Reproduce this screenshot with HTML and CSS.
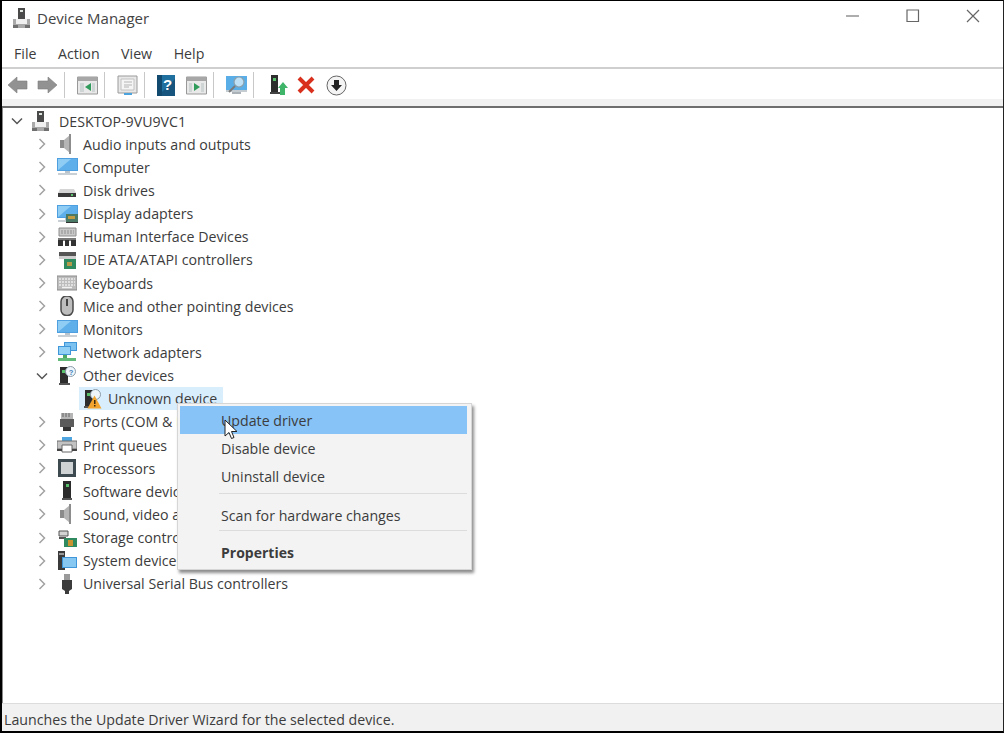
FILE: index.html
```html
<!DOCTYPE html>
<html lang="en">
<head>
<meta charset="utf-8">
<title>Device Manager</title>
<link rel="stylesheet" href="styles.css">
</head>
<body>
<svg class="defs" width="0" height="0" aria-hidden="true">
  <defs>
    <g id="i-pc">
      <path d="M6 0h7v11H6z" fill="#4a4a4a"/><path d="M8 2h3v2H8z" fill="#dfe6df"/>
      <path d="M1 11h17v9H1z" fill="#a9a9a9"/><path d="M4 11h11v5H4z" fill="#f0f0f0"/><path d="M1 17h5v3H1zM13 17h5v3h-5z" fill="#6f6f6f"/>
    </g>
    <g id="i-tower">
      <path d="M3 1h8v17H3z" fill="#2d2d2d"/><path d="M5 4h3v3H5z" fill="#58c06a"/><path d="M2 17h11v2H2z" fill="#555"/>
    </g>
    <g id="i-monitor">
      <path d="M0 1h21v13H0z" fill="#4d9fdf"/><path d="M1 2h19v11H1z" fill="#8fcdf5"/><path d="M1 13 14 2h6v11z" fill="#5fb0ea"/>
      <path d="M8 14h5v2H8z" fill="#b9c4cc"/><path d="M1 16h19v2H1z" fill="#c9d0d5"/>
    </g>
    <g id="i-speaker">
      <path d="M3 6h4v8H3z" fill="#8b8b8b"/><path d="M7 6l6-5v18l-6-5z" fill="#b5b5b5"/><path d="M12 0h2v20h-2z" fill="#8d8d8d"/>
    </g>
  </defs>
</svg>
<div class="window">
  <header class="titlebar">
    <svg class="app-icon" width="20" height="20" viewBox="0 0 20 20"><use href="#i-pc"/></svg>
    <span class="title">Device Manager</span>
    <div class="controls">
      <svg width="14" height="14" viewBox="0 0 14 14"><path d="M0 7h13" stroke="#777" stroke-width="1.2"/></svg>
      <svg width="14" height="14" viewBox="0 0 14 14"><path d="M1 1h11.500v11.500H1z" fill="none" stroke="#666" stroke-width="1.200"/></svg>
      <svg width="14" height="14" viewBox="0 0 14 14"><path d="M1 1l12 12M13 1L1 13" stroke="#666" stroke-width="1.200"/></svg>
    </div>
  </header>
  <nav class="menubar">
    <span>File</span><span>Action</span><span>View</span><span>Help</span>
  </nav>
  <div class="toolbar">
    <svg class="tb" width="21" height="20" viewBox="0 0 21 20"><path d="M1 10l9-8v4h10v8H10v4z" fill="#929292" stroke="#7d7d7d" stroke-width=".6"/></svg>
    <svg class="tb gap3" width="21" height="20" viewBox="0 0 21 20"><path d="M20 10l-9-8v4H1v8h10v4z" fill="#929292" stroke="#7d7d7d" stroke-width=".6"/></svg>
    <i class="tsep"></i>
    <svg class="tb" width="21" height="20" viewBox="0 0 21 20"><path d="M.5 2h20v17H.5z" fill="#e9e9e9" stroke="#999"/><path d="M.5 2h20v4H.5z" fill="#a7a7a7"/><path d="M3 8h4v9H3zM15 8h3v9h-3z" fill="#cfd4d4"/><path d="M14 8v8l-6-4z" fill="#2f9c5b"/></svg>
    <i class="tsep"></i>
    <svg class="tb" width="21" height="21" viewBox="0 0 21 21"><path d="M1 1h19v17H1z" fill="#e8e8e8" stroke="#9a9a9a"/><path d="M4 4h13v11H4z" fill="#f5f5f5" stroke="#c2c2c2"/><path d="M7 7h8M7 10h8M7 12h5" stroke="#b5b5b5"/><path d="M7 18h8v2H7z" fill="#4da3dd"/></svg>
    <i class="tsep"></i>
    <svg class="tb" width="18" height="21" viewBox="0 0 18 21"><path d="M0 0h18v21H0z" fill="#1f6f9f"/><path d="M0 0h5v21H0z" fill="#12496f"/><path d="M5 17l13-13v17H5z" fill="#17557e"/><text x="6" y="15" class="tb-q">?</text></svg>
    <svg class="tb gap5" width="21" height="20" viewBox="0 0 21 20"><path d="M.5 2h20v17H.5z" fill="#e9e9e9" stroke="#999"/><path d="M.5 2h20v4H.5z" fill="#a7a7a7"/><path d="M3 8h3v9H3zM15 8h3v9h-3z" fill="#cfd4d4"/><path d="M8 8v8l6-4z" fill="#2f9c5b"/></svg>
    <i class="tsep"></i>
    <svg class="tb" width="21" height="21" viewBox="0 0 21 21"><path d="M0 1h21v14H0z" fill="#5aaee8"/><path d="M0 15h21v2H0z" fill="#c4ccd2"/><path d="M6 17h9v2H6z" fill="#aab2b8"/><circle cx="13" cy="7" r="5" fill="#bfe0f5" stroke="#8aa0ac" stroke-width="1.200"/><path d="M9 11l-6 6" stroke="#7a7a7a" stroke-width="2"/></svg>
    <i class="tsep"></i>
    <svg class="tb gap4" width="18" height="22" viewBox="0 0 18 22"><path d="M1 1h7v17H1z" fill="#2d2d2d"/><path d="M3 4h3v3H3z" fill="#58c06a"/><path d="M0 18h10v2H0z" fill="#444"/><path d="M13 8l5 6h-3v7h-5v-7H8z" fill="#3fb56a"/></svg>
    <svg class="tb gap3" width="18" height="18" viewBox="0 0 18 18"><path d="M2 2l14 14M16 2L2 16" stroke="#d8301c" stroke-width="4"/></svg>
    <svg class="tb gap5" width="21" height="21" viewBox="0 0 21 21"><circle cx="10.500" cy="10.500" r="9.500" fill="#f4f4f4" stroke="#666"/><path d="M8 5h5v5h3l-5.500 6L5 10h3z" fill="#222"/></svg>
  </div>
  <div class="strip"></div>
  <main class="tree">
    <div class="row root"><svg class="chev" width="12" height="12" viewBox="0 0 12 12"><path d="M1 3.500l5 5 5-5" class="chev-open"/></svg><svg class="ico" width="20" height="20" viewBox="0 0 20 20"><use href="#i-pc"/></svg><span>DESKTOP-9VU9VC1</span></div>

    <div class="row"><svg class="chev" width="12" height="12" viewBox="0 0 12 12"><path d="M3.500 1l5 5-5 5" class="chev-closed"/></svg><svg class="ico" width="20" height="20" viewBox="0 0 20 20"><use href="#i-speaker"/></svg><span>Audio inputs and outputs</span></div>

    <div class="row"><svg class="chev" width="12" height="12" viewBox="0 0 12 12"><path d="M3.500 1l5 5-5 5" class="chev-closed"/></svg><svg class="ico wide" width="21" height="20" viewBox="0 0 21 20"><use href="#i-monitor"/></svg><span>Computer</span></div>

    <div class="row"><svg class="chev" width="12" height="12" viewBox="0 0 12 12"><path d="M3.500 1l5 5-5 5" class="chev-closed"/></svg><svg class="ico" width="20" height="20" viewBox="0 0 20 20"><path d="M3 9h14l2 4H1z" fill="#d5d5d5"/><path d="M1 13h18v4H1z" fill="#3a3a3a"/><path d="M14 14h2v2h-2z" fill="#5bc06c"/></svg><span>Disk drives</span></div>

    <div class="row"><svg class="chev" width="12" height="12" viewBox="0 0 12 12"><path d="M3.500 1l5 5-5 5" class="chev-closed"/></svg><svg class="ico wide" width="21" height="20" viewBox="0 0 21 20"><use href="#i-monitor"/><path d="M9 10h12v8H9z" fill="#4a7a66"/><path d="M11 12h7v3h-7z" fill="#c19b43"/><path d="M9 18h12v1H9z" fill="#333"/></svg><span>Display adapters</span></div>

    <div class="row"><svg class="chev" width="12" height="12" viewBox="0 0 12 12"><path d="M3.500 1l5 5-5 5" class="chev-closed"/></svg><svg class="ico" width="20" height="20" viewBox="0 0 20 20"><path d="M2 1h17v8H2z" fill="#c9c9c9" stroke="#8e8e8e"/><path d="M4 4h13M4 6h13" stroke="#8e8e8e" stroke-dasharray="2 1"/><path d="M1 11h18v3H1z" fill="#777"/><path d="M1 13h5v6H1zM8 13h4v6H8zM14 13h5v6h-5z" fill="#333"/></svg><span>Human Interface Devices</span></div>

    <div class="row"><svg class="chev" width="12" height="12" viewBox="0 0 12 12"><path d="M3.500 1l5 5-5 5" class="chev-closed"/></svg><svg class="ico" width="20" height="20" viewBox="0 0 20 20"><path d="M2 2h17v4H2z" fill="#555"/><path d="M2 6h17v3H2z" fill="#cfcfcf"/><path d="M7 9h12v10H7z" fill="#2f8a60"/><path d="M10 12h5v4h-5z" fill="#b59a4a"/></svg><span>IDE ATA/ATAPI controllers</span></div>

    <div class="row"><svg class="chev" width="12" height="12" viewBox="0 0 12 12"><path d="M3.500 1l5 5-5 5" class="chev-closed"/></svg><svg class="ico" width="20" height="20" viewBox="0 0 20 20"><path d="M0 3h20v14H0z" fill="#bcbcbc" stroke="#8b8b8b"/><path d="M2 6h16M2 9h16M2 12h16" stroke="#ececec" stroke-width="1.500" stroke-dasharray="2 1"/><path d="M5 14.500h10" stroke="#f2f2f2" stroke-width="1.500"/></svg><span>Keyboards</span></div>

    <div class="row"><svg class="chev" width="12" height="12" viewBox="0 0 12 12"><path d="M3.500 1l5 5-5 5" class="chev-closed"/></svg><svg class="ico" width="20" height="20" viewBox="0 0 20 20"><rect x="4" y="0" width="12" height="19.500" rx="5.500" fill="#bdbdbd" stroke="#4a4a4a" stroke-width="1.500"/><path d="M9 3h2v7H9z" fill="#444"/></svg><span>Mice and other pointing devices</span></div>

    <div class="row"><svg class="chev" width="12" height="12" viewBox="0 0 12 12"><path d="M3.500 1l5 5-5 5" class="chev-closed"/></svg><svg class="ico wide" width="21" height="20" viewBox="0 0 21 20"><use href="#i-monitor"/></svg><span>Monitors</span></div>

    <div class="row"><svg class="chev" width="12" height="12" viewBox="0 0 12 12"><path d="M3.500 1l5 5-5 5" class="chev-closed"/></svg><svg class="ico" width="20" height="20" viewBox="0 0 20 20"><path d="M7 0h13v9H7z" fill="#3f96d8"/><path d="M8 1h11v7H8z" fill="#7cc2f0"/><path d="M1 4h13v9H1z" fill="#3f96d8"/><path d="M2 5h11v7H2z" fill="#93d0f5"/><path d="M6 13h4v3H6z" fill="#4fa866"/><path d="M1 16h18v3H1z" fill="#62bb7a"/></svg><span>Network adapters</span></div>

    <div class="row"><svg class="chev" width="12" height="12" viewBox="0 0 12 12"><path d="M1 3.500l5 5 5-5" class="chev-open"/></svg><svg class="ico" width="20" height="20" viewBox="0 0 20 20"><use href="#i-tower"/><circle cx="13.500" cy="5.500" r="5" fill="#eef5fb" stroke="#8a9aa8"/><text x="11.800" y="8.500" class="q">?</text></svg><span>Other devices</span></div>

    <div class="row child"><div class="selected"><svg class="ico" width="20" height="20" viewBox="0 0 20 20"><use href="#i-tower"/><circle cx="13.500" cy="5.500" r="5" fill="#eef5fb" stroke="#8a9aa8"/><path d="M12.500 6.500l7 13h-14z" fill="#f0a32e"/><path d="M12 11h1.500v4H12zM12 16h1.500v1.500H12z" fill="#3a2a10"/></svg><span>Unknown device</span></div></div>

    <div class="row"><svg class="chev" width="12" height="12" viewBox="0 0 12 12"><path d="M3.500 1l5 5-5 5" class="chev-closed"/></svg><svg class="ico" width="20" height="20" viewBox="0 0 20 20"><path d="M4 1h12v7H4z" fill="#b5b5b5"/><path d="M6 1v4M9 1v4M12 1v4" stroke="#666"/><path d="M3 7h14v8H3z" fill="#5a5a5a"/><path d="M6 15h8v4H6z" fill="#333"/></svg><span>Ports (COM &amp; LPT)</span></div>

    <div class="row"><svg class="chev" width="12" height="12" viewBox="0 0 12 12"><path d="M3.500 1l5 5-5 5" class="chev-closed"/></svg><svg class="ico" width="20" height="20" viewBox="0 0 20 20"><path d="M5 2h10v5H5z" fill="#4ea5e0"/><path d="M0 6h20v8H0z" fill="#c2c2c2" stroke="#6f6f6f"/><path d="M5 10h10v7H5z" fill="#fff" stroke="#666"/><path d="M0 14h5v2H0zM15 14h5v2h-5z" fill="#444"/></svg><span>Print queues</span></div>

    <div class="row"><svg class="chev" width="12" height="12" viewBox="0 0 12 12"><path d="M3.500 1l5 5-5 5" class="chev-closed"/></svg><svg class="ico" width="20" height="20" viewBox="0 0 20 20"><path d="M1 1h18v18H1z" fill="#3d4a50"/><path d="M4 4h12v12H4z" fill="#cfd3d4"/></svg><span>Processors</span></div>

    <div class="row"><svg class="chev" width="12" height="12" viewBox="0 0 12 12"><path d="M3.500 1l5 5-5 5" class="chev-closed"/></svg><svg class="ico" width="20" height="20" viewBox="0 0 20 20"><path d="M6 0h8v18H6z" fill="#2b2b2b"/><path d="M9 3h3v3H9z" fill="#58c06a"/><path d="M5 17h10v2H5z" fill="#555"/></svg><span>Software devices</span></div>

    <div class="row"><svg class="chev" width="12" height="12" viewBox="0 0 12 12"><path d="M3.500 1l5 5-5 5" class="chev-closed"/></svg><svg class="ico" width="20" height="20" viewBox="0 0 20 20"><use href="#i-speaker"/></svg><span>Sound, video and game controllers</span></div>

    <div class="row"><svg class="chev" width="12" height="12" viewBox="0 0 12 12"><path d="M3.500 1l5 5-5 5" class="chev-closed"/></svg><svg class="ico" width="20" height="20" viewBox="0 0 20 20"><path d="M2 3h9v5H2z" fill="#d4d4d4" stroke="#555"/><path d="M2 10h7" stroke="#555" stroke-width="2"/><path d="M7 10h13v9H7z" fill="#2f8a60"/><path d="M11 12h5v6h-5z" fill="#c9932f"/></svg><span>Storage controllers</span></div>

    <div class="row"><svg class="chev" width="12" height="12" viewBox="0 0 12 12"><path d="M3.500 1l5 5-5 5" class="chev-closed"/></svg><svg class="ico" width="20" height="20" viewBox="0 0 20 20"><path d="M1 0h7v19H1z" fill="#3a3a3a"/><path d="M2 2h5v2H2z" fill="#999"/><path d="M5 6h15v11H5z" fill="#3f96d8"/><path d="M6 7h13v9H6z" fill="#86c8f2"/></svg><span>System devices</span></div>

    <div class="row"><svg class="chev" width="12" height="12" viewBox="0 0 12 12"><path d="M3.500 1l5 5-5 5" class="chev-closed"/></svg><svg class="ico" width="20" height="20" viewBox="0 0 20 20"><path d="M7 0h6v6H7z" fill="#9a9a9a"/><path d="M5 6h10v9l-3 2v3H8v-3l-3-2z" fill="#3c3c3c"/></svg><span>Universal Serial Bus controllers</span></div>
  </main>
  <footer class="statusbar">Launches the Update Driver Wizard for the selected device.</footer>
</div>
<div class="menu">
  <div class="item active">Update driver</div>
  <div class="item">Disable device</div>
  <div class="item">Uninstall device</div>
  <hr class="sep">
  <div class="item">Scan for hardware changes</div>
  <hr class="sep sep-tight">
  <div class="item bold">Properties</div>
</div>
<svg class="cursor" width="14" height="22" viewBox="0 0 14 22"><path d="M1 1v16l4-3.500 2.500 6 2.500-1-2.500-6H13z" fill="#fff" stroke="#222" stroke-width="1"/></svg>
</body>
</html>
```
FILE: styles.css
```css
* { box-sizing: border-box; }
html, body { margin: 0; padding: 0; }
body {
  width: 1004px;
  height: 733px;
  overflow: hidden;
  position: relative;
  background: #fff;
  font-family: "Open Sans", "Liberation Sans", sans-serif;
  font-size: 14.200px;
  color: #3c3c3c;
}
.defs { position: absolute; }
.window {
  width: 1004px;
  height: 733px;
  display: flex;
  flex-direction: column;
  border-top: 1px solid #000;
  border-left: 2px solid #000;
  border-right: 1px solid #222;
  border-bottom: 2px solid #000;
  background: #fff;
}
.titlebar {
  height: 38px;
  display: flex;
  align-items: center;
  padding: 0 0 5px 10px;
  gap: 5px;
  flex: none;
}
.title { font-size: 15px; color: #444; }
.controls {
  margin-left: auto;
  display: flex;
  gap: 46px;
  padding-right: 23px;
  align-items: center;
  margin-top: -3px;
}
.menubar {
  height: 30px;
  display: flex;
  align-items: center;
  gap: 21.500px;
  padding: 0 0 0 12px;
  border-bottom: 2px solid #cfcfcf;
  flex: none;
}
.toolbar {
  height: 30px;
  display: flex;
  align-items: center;
  padding: 2px 0 0 5px;
  gap: 6px;
  flex: none;
}
.tb { flex: none; }
.gap3 { margin-left: 3px; }
.gap4 { margin-left: 4px; }
.gap5 { margin-left: 5px; }
.tsep { width: 1px; height: 26px; margin-right: 6px; background: #c8c8c8; flex: none; }
.tb-q { font: bold 15px "Liberation Sans", sans-serif; fill: #fff; }
.strip {
  height: 9px;
  background: #f1f1f1;
  border-bottom: 2px solid #6e6e6e;
  flex: none;
}
.tree {
  flex: 1;
  padding-top: 1.500px;
  min-height: 0;
  border-left: 1px solid #8a8a8a;
}
.row {
  height: 23.150px;
  display: flex;
  align-items: center;
  padding-left: 33px;
  white-space: nowrap;
}
.row.root { padding-left: 8px; }
.row.child { padding-left: 76px; }
.chev { flex: none; }
.chev-closed, .chev-open { fill: none; stroke-width: 1.500; }
.chev-closed { stroke: #a2a2a2; }
.chev-open { stroke: #555; }
.ico { flex: none; margin-left: 9px; margin-right: 6px; }
.ico.wide { margin-right: 5px; }
.root .ico { margin-left: 8px; margin-right: 8px; }
.q { font: bold 7.500px "Liberation Sans", sans-serif; fill: #3f7fb8; }
.selected {
  background: #d9eefc;
  height: 23px;
  display: flex;
  align-items: center;
  padding: 0 6px 0 3px;
}
.selected .ico { margin-left: 0; margin-right: 6px; }
.statusbar {
  height: 28px;
  flex: none;
  border-top: 1px solid #dcdcdc;
  background: #f1f1f1;
  padding: 6px 0 0 2px;
  line-height: 20px;
  color: #3c3c3c;
}
.menu {
  position: absolute;
  left: 177px;
  top: 403px;
  width: 295px;
  height: 167px;
  padding: 2px 4px 0 2px;
  background: #f3f3f3;
  border: 1px solid #d6d6d6;
  box-shadow: 2px 3px 3px rgba(0, 0, 0, 0.45);
}
.item {
  height: 28px;
  line-height: 29.500px;
  padding-left: 41px;
  color: #3c3c3c;
}
.item.active { background: #87c3f7; }
.item.bold { font-weight: 700; font-size: 14px; }
.sep {
  margin: 3px 0 7px 39px;
  border: 0;
  height: 1px;
  background: #dcdcdc;
}
.sep-tight { margin-top: 1px; }
.cursor { position: absolute; left: 224px; top: 419px; }
```
